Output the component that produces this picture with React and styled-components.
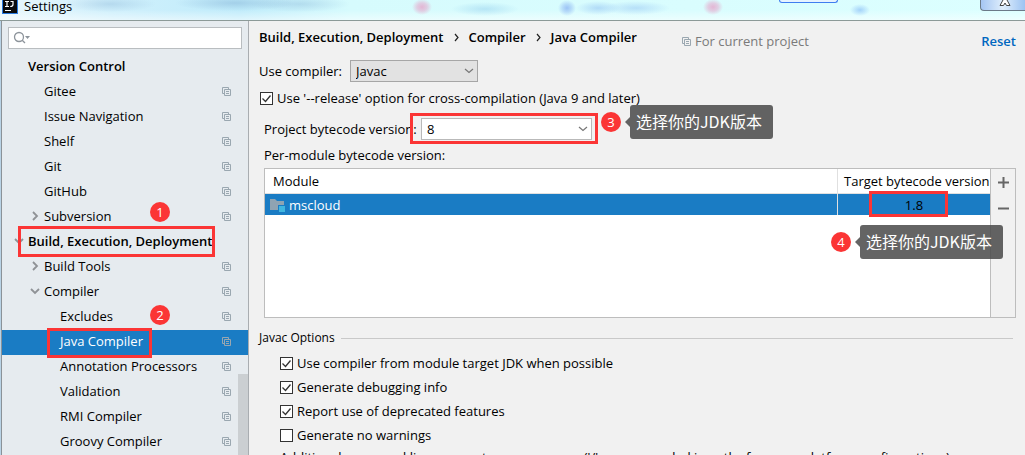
import React from 'react';
import styled, { createGlobalStyle } from 'styled-components';

const GlobalStyle = createGlobalStyle`
  *, *::before, *::after { box-sizing: border-box; }
  html, body, #root { height: 100%; }
  body {
    margin: 0;
    overflow: hidden;
    font: 13px/20px "Open Sans", "Noto Sans CJK SC", sans-serif;
    color: #000;
  }
  button, input, select { font: inherit; color: inherit; }
`;

const red = '#fb3535';
const blue = '#1a7cc4';

const Window = styled.div`
  display: flex;
  flex-direction: column;
  height: 100vh;
  overflow: hidden;
  background: #b9d3e6;
`;

const TitleBar = styled.header`
  position: relative;
  display: flex;
  flex: none;
  gap: 6px;
  height: 21px;
  padding-left: 2px;
  border-bottom: 1px solid #8c9a98;
  background:
    radial-gradient(ellipse 10px 8px at 422px 7px, rgba(228, 175, 208, 0.9), rgba(228, 175, 208, 0.6) 50%, transparent),
    radial-gradient(ellipse 10px 8px at 713px 7px, rgba(228, 175, 208, 0.9), rgba(228, 175, 208, 0.6) 50%, transparent),
    radial-gradient(ellipse 9px 8px at 567px 8px, rgba(150, 190, 245, 0.9), rgba(150, 190, 245, 0.5) 50%, transparent),
    radial-gradient(ellipse 22px 7px at 598px 8px, rgba(160, 205, 245, 0.7), transparent),
    radial-gradient(ellipse 34px 7px at 636px 8px, rgba(160, 205, 245, 0.6), transparent),
    radial-gradient(ellipse 34px 7px at 485px 9px, rgba(160, 215, 240, 0.6), transparent),
    radial-gradient(ellipse 10px 6px at 860px 10px, rgba(150, 200, 248, 0.8), transparent),
    radial-gradient(ellipse 46px 8px at 110px 4px, rgba(120, 165, 205, 0.3), transparent),
    radial-gradient(ellipse 60px 8px at 235px 3px, rgba(120, 165, 205, 0.4), transparent),
    radial-gradient(ellipse 50px 8px at 300px 4px, rgba(120, 165, 205, 0.3), transparent),
    linear-gradient(180deg, transparent 50%, rgba(255, 255, 255, 0.5)),
    linear-gradient(90deg, #e9f7fd 0, #d0f0fc 110px, #c0ecfb 240px, #d6fbfd 350px, #dcffff 100%);
`;

const TitleText = styled.h1`
  margin: 0;
  font-size: 13px;
  font-weight: 400;
  line-height: 13px;
`;

const TopTab = styled.span`
  position: absolute;
  top: 0;
  left: 76%;
  width: 59px;
  height: 3px;
  border: 1px solid #3f7df0;
  border-top: 0;
  border-radius: 0 0 4px 4px;
  background: #e6f3ff;
`;

const CloseButton = styled.button`
  position: absolute;
  top: 0;
  right: 0;
  width: 45px;
  height: 11px;
  padding: 0;
  border: 1px solid #6b7a88;
  border-width: 0 0 1px 1px;
  border-radius: 0 0 0 4px;
  background: linear-gradient(90deg, #a5c6f3, #dfeefc 50%, #9cc3f2);
  svg { display: block; margin: 0 auto 4px 18px; }
`;

const Body = styled.div`
  display: flex;
  flex: 1;
  min-height: 0;
  padding-left: 1px;
`;

const Sidebar = styled.aside`
  position: relative;
  flex: none;
  width: 248px;
  border: solid #8b9298;
  border-width: 0 1px;
  border-right-color: #a9adb1;
  background: #e6ebef;
`;

const SearchBox = styled.label`
  display: flex;
  align-items: center;
  height: 22px;
  margin: 6px;
  border: 1px solid #b9bdc0;
  background: #fff;
  svg { flex: none; margin-left: 4px; }
  input {
    flex: 1;
    min-width: 0;
    padding: 0 4px;
    border: 0;
    outline: 0;
    background: none;
  }
`;

const Tree = styled.ul`
  margin: 0;
  padding: 0;
  list-style: none;
`;

const TreeItem = styled.li`
  position: relative;
`;

const indents = { 0: 12, 1: 28, 2: 44 };

const TreeButton = styled.button`
  display: flex;
  align-items: center;
  width: 100%;
  height: 25px;
  padding: 0 17px 3px ${(p) => indents[p.$level]}px;
  border: 0;
  background: ${(p) => (p.$selected ? blue : 'none')};
  color: ${(p) => (p.$selected ? '#fff' : '#000')};
  font-weight: ${(p) => (p.$level === 0 ? 600 : 400)};
  text-align: left;
  white-space: nowrap;
`;

const ArrowSlot = styled.span`
  display: flex;
  flex: none;
  width: 14px;
`;

const TreeLabel = styled.span`
  flex: 1;
`;

const ScrollThumb = styled.div`
  position: absolute;
  right: 0;
  bottom: 0;
  width: 10px;
  height: 81px;
  background: rgba(170, 172, 175, 0.45);
`;

const Badge = styled.span`
  position: absolute;
  z-index: 2;
  display: grid;
  place-items: center;
  width: 20px;
  height: 20px;
  border-radius: 50%;
  background: ${red};
  color: #fff;
  font-size: 13px;
`;

const TreeBadge = styled(Badge)`
  top: ${(p) => p.$top}px;
  left: 148px;
`;

const Frame = styled.span`
  position: absolute;
  z-index: 2;
  border: 3px solid ${red};
  pointer-events: none;
`;

const Main = styled.main`
  display: flex;
  flex: 1;
  flex-direction: column;
  min-width: 0;
  padding: 6px 9px 0 10px;
  background: #f1f1f1;
  > * { flex: none; }
`;

const Header = styled.div`
  display: flex;
  align-items: flex-start;
  height: 33px;
`;

const Crumbs = styled.nav`
  display: flex;
  width: 423px;
  gap: 10px;
  font-weight: 600;
  white-space: nowrap;
  svg { flex: none; margin-top: 6px; }
`;

const Scope = styled.span`
  display: flex;
  flex: 1;
  align-items: center;
  gap: 4px;
  padding-top: 4px;
  color: #7a7a7a;
`;

const ResetLink = styled.a`
  padding-top: 4px;
  color: #0067c0;
  font-weight: 600;
  text-decoration: none;
`;

const Field = styled.div`
  display: flex;
  align-items: center;
  height: 22px;
  padding-left: ${(p) => (p.$inset ? 5 : 0)}px;
  white-space: nowrap;
`;

const FieldLabel = styled.label`
  flex: none;
  width: ${(p) => p.$width}px;
`;

const Picker = styled.span`
  position: relative;
  width: ${(p) => p.$width}px;
  height: 22px;
  select {
    width: 100%;
    height: 100%;
    padding: 0 24px 0 5px;
    border: 1px solid ${(p) => (p.$plain ? '#b9b9b9' : '#a6a6a6')};
    border-radius: 0;
    outline: 0;
    background: ${(p) => (p.$plain ? '#fff' : '#e2e2e2')};
    appearance: none;
  }
  > svg {
    position: absolute;
    top: 8px;
    right: 4px;
    pointer-events: none;
  }
`;

const CheckLabel = styled.label`
  display: flex;
  align-items: center;
  gap: 4px;
  height: 24px;
  white-space: nowrap;
`;

const Box = styled.span`
  position: relative;
  display: flex;
  width: 13px;
  height: 13px;
  input {
    width: 13px;
    height: 13px;
    margin: 0;
    border: 1px solid #333;
    background: #fff;
    appearance: none;
  }
  svg { position: absolute; inset: 0; display: none; pointer-events: none; }
  input:checked + svg { display: block; }
`;

const ReleaseRow = styled.div`
  margin: 4px 0 8px 1px;
`;

const Tip = styled.span`
  position: absolute;
  z-index: 3;
  padding: 0 6px;
  width: 143px;
  height: 34px;
  border-radius: 3px;
  background: rgba(74, 74, 74, 0.86);
  color: #fff;
  font: 16px/32px "Noto Sans CJK SC", sans-serif;
  white-space: nowrap;
  &::before {
    content: '';
    position: absolute;
    top: 12px;
    left: -5px;
    border: 5px solid transparent;
    border-left: 0;
    border-right-color: rgba(74, 74, 74, 0.86);
  }
`;

const TableLabel = styled.div`
  height: 20px;
  margin: 5px 0 3px 5px;
`;

const TablePanel = styled.section`
  display: flex;
  height: 150px;
  margin-left: 5px;
  border: 1px solid #bdbdbd;
  background: #fff;
`;

const TableArea = styled.div`
  flex: 1;
`;

const ModuleTable = styled.table`
  width: 100%;
  border-collapse: separate;
  border-spacing: 0;
  table-layout: fixed;
  th, td {
    padding: 0 8px;
    text-align: left;
    font-weight: 400;
    white-space: nowrap;
  }
  th { height: 25px; border-bottom: 1px solid #e0e0e0; }
  th + th, td + td { width: 153px; border-left: 1px solid #e0e0e0; }
  th + th { padding: 0 6px; }
  td { height: 21px; padding: 0 4px; background: ${blue}; color: #fff; }
  td + td { position: relative; color: #000; text-align: center; }
`;

const ModuleName = styled.span`
  display: flex;
  align-items: center;
  gap: 4px;
`;

const SideTools = styled.div`
  display: flex;
  flex-direction: column;
  width: 25px;
  border-left: 1px solid #bdbdbd;
  background: #f1f1f1;
  button {
    display: grid;
    place-items: center;
    width: 24px;
    height: 26px;
    padding: 0;
    border: 0;
    background: none;
  }
`;

const Options = styled.fieldset`
  min-width: 0;
  margin: 10px 0 0;
  padding: 0;
  border: 0;
`;

const OptionsTitle = styled.legend`
  display: flex;
  align-items: center;
  gap: 6px;
  width: 100%;
  padding: 0 3px 0 0;
  font-size: 12px;
  &::after { content: ''; flex: 1; height: 1px; background: #c9c9c9; }
`;

const OptionList = styled.div`
  padding: 3px 0 0 21px;
`;

const Extra = styled.div`
  display: flex;
  gap: 75px;
  white-space: nowrap;
`;

const CopyIcon = () => (
  <svg width="9" height="9" viewBox="0 0 9 9" fill="none" stroke="#9aa7b0" aria-hidden="true">
    <path d="M2 6.500H.5V.5h6V2M2.500 2.500h6v6h-6zM4 4.500h3M4 6.500h3" />
  </svg>
);

const Chevron = ({ color = '#777' }) => (
  <svg width="10" height="6" viewBox="0 0 10 6" fill="none" stroke={color} strokeWidth="1.200" aria-hidden="true">
    <path d="M1 1l4 3.500L9 1" />
  </svg>
);

const TreeArrow = ({ open }) => (
  <svg width="10" height="10" viewBox="0 0 10 10" fill="none" stroke="#8f9296" strokeWidth="1.800" aria-hidden="true">
    <path d={open ? 'M1 3l4 4 4-4' : 'M3 1l4 4-4 4'} />
  </svg>
);

const CrumbArrow = () => (
  <svg width="5" height="9" viewBox="0 0 5 9" fill="none" stroke="#222" strokeWidth="1.200" aria-hidden="true">
    <path d="M1 1l3 3.500L1 8" />
  </svg>
);

const Check = ({ label, checked }) => (
  <CheckLabel>
    <Box>
      <input type="checkbox" defaultChecked={checked} />
      <svg width="13" height="13" viewBox="0 0 13 13" fill="none" stroke="#333" strokeWidth="1.300">
        <path d="M2.500 6.500l3 3 5-6" />
      </svg>
    </Box>
    {label}
  </CheckLabel>
);

const BuildFrame = styled(Frame)`
  top: -4px;
  left: 16px;
  width: 197px;
  height: 31px;
`;
const JavaFrame = styled(Frame)`
  top: -2px;
  left: 45px;
  width: 105px;
  height: 30px;
`;
const VersionFrame = styled(Frame)`
  inset: -5px -6px -4px -11px;
`;
const TargetFrame = styled(Frame)`
  inset: -3px 42px -2px 31px;
`;
const VersionBadge = styled(Badge)`
  top: -6px;
  left: 180px;
`;
const VersionTip = styled(Tip)`
  top: -13px;
  left: 209px;
`;
const TargetBadge = styled(Badge)`
  top: 38px;
  left: -7px;
`;
const TargetTip = styled(Tip)`
  top: 31px;
  left: 22px;
  text-align: left;
`;

const tree = [
  { label: 'Version Control', level: 0 },
  { label: 'Gitee', level: 1, copy: true },
  { label: 'Issue Navigation', level: 1, copy: true },
  { label: 'Shelf', level: 1, copy: true },
  { label: 'Git', level: 1, copy: true },
  { label: 'GitHub', level: 1, copy: true },
  { label: 'Subversion', level: 1, copy: true, arrow: 'closed' },
  { label: 'Build, Execution, Deployment', level: 0, arrow: 'open', mark: <><BuildFrame /><TreeBadge $top={-28}>1</TreeBadge></> },
  { label: 'Build Tools', level: 1, copy: true, arrow: 'closed' },
  { label: 'Compiler', level: 1, copy: true, arrow: 'open' },
  { label: 'Excludes', level: 2, copy: true },
  { label: 'Java Compiler', level: 2, copy: true, selected: true, mark: <><JavaFrame /><TreeBadge $top={-25}>2</TreeBadge></> },
  { label: 'Annotation Processors', level: 2, copy: true },
  { label: 'Validation', level: 2, copy: true },
  { label: 'RMI Compiler', level: 2, copy: true },
  { label: 'Groovy Compiler', level: 2, copy: true },
];

const options = [
  ['Use compiler from module target JDK when possible', true],
  ['Generate debugging info', true],
  ['Report use of deprecated features', true],
  ['Generate no warnings', false],
];

export default function App() {
  return (
    <Window>
      <GlobalStyle />
      <TitleBar>
        <svg width="16" height="14" viewBox="0 0 16 14" aria-hidden="true">
          <path d="M0 0h16v14H0z" fill="#2c7be0" />
          <path d="M1 0h14v13H1z" fill="#0b0b0d" />
          <path d="M3 1.500h4M5 1v5M3 6.500h4M8.500 1.500h3M11 1v3.500q0 2-2.800 2" stroke="#fff" strokeWidth="1.200" fill="none" />
          <path d="M3 10.500h6" stroke="#fff" />
        </svg>
        <TitleText>Settings</TitleText>
        <TopTab />
        <CloseButton aria-label="Close">
          <svg width="12" height="7" viewBox="0 0 12 7" fill="#fff" stroke="#444" aria-hidden="true">
            <path d="M4 0L1 5.500h3.500L6 3l1.500 2.500H11L8 0" />
          </svg>
        </CloseButton>
      </TitleBar>
      <Body>
        <Sidebar>
          <SearchBox>
            <svg width="18" height="14" viewBox="0 0 18 14" fill="none" stroke="#8d949b" strokeWidth="1.300" aria-hidden="true">
              <circle cx="6" cy="6" r="4.500" />
              <path d="M9.200 9.200L12 12" />
              <path d="M12 5h5l-2.500 3z" fill="#8d949b" stroke="none" />
            </svg>
            <input type="text" aria-label="Search settings" />
          </SearchBox>
          <Tree>
            {tree.map((t) => (
              <TreeItem key={t.label}>
                <TreeButton $level={t.level} $selected={t.selected}>
                  <ArrowSlot>{t.arrow && <TreeArrow open={t.arrow === 'open'} />}</ArrowSlot>
                  <TreeLabel>{t.label}</TreeLabel>
                  {t.copy && <CopyIcon />}
                </TreeButton>
                {t.mark}
              </TreeItem>
            ))}
          </Tree>
          <ScrollThumb />
        </Sidebar>
        <Main>
          <Header>
            <Crumbs aria-label="Breadcrumb">
              <span>Build, Execution, Deployment</span>
              <CrumbArrow />
              <span>Compiler</span>
              <CrumbArrow />
              <span>Java Compiler</span>
            </Crumbs>
            <Scope><CopyIcon />For current project</Scope>
            <ResetLink href="#reset">Reset</ResetLink>
          </Header>
          <Field>
            <FieldLabel htmlFor="compiler" $width={91}>Use compiler:</FieldLabel>
            <Picker $width={128}>
              <select id="compiler" defaultValue="Javac"><option>Javac</option></select>
              <Chevron />
            </Picker>
          </Field>
          <ReleaseRow>
            <Check label="Use '--release' option for cross-compilation (Java 9 and later)" checked />
          </ReleaseRow>
          <Field $inset>
            <FieldLabel htmlFor="bytecode" $width={157}>Project bytecode version:</FieldLabel>
            <Picker $width={171} $plain>
              <select id="bytecode" defaultValue="8"><option>8</option></select>
              <Chevron />
              <VersionFrame />
              <VersionBadge>3</VersionBadge>
              <VersionTip>选择你的JDK版本</VersionTip>
            </Picker>
          </Field>
          <TableLabel>Per-module bytecode version:</TableLabel>
          <TablePanel>
            <TableArea>
              <ModuleTable>
                <thead>
                  <tr><th>Module</th><th>Target bytecode version</th></tr>
                </thead>
                <tbody>
                  <tr>
                    <td>
                      <ModuleName>
                        <svg width="16" height="14" viewBox="0 0 16 14" aria-hidden="true">
                          <path d="M1 1h5l2 2h7v9H1z" fill="#8fa3b2" />
                          <path d="M9 7h7v7H9z" fill={blue} />
                          <path d="M10 8h6v6h-6z" fill="#40b6e0" />
                        </svg>
                        mscloud
                      </ModuleName>
                    </td>
                    <td>
                      1.8
                      <TargetFrame />
                      <TargetBadge>4</TargetBadge>
                      <TargetTip>选择你的JDK版本</TargetTip>
                    </td>
                  </tr>
                </tbody>
              </ModuleTable>
            </TableArea>
            <SideTools>
              <button aria-label="Add">
                <svg width="11" height="11" viewBox="0 0 11 11" stroke="#666" strokeWidth="2"><path d="M0 5.500h11M5.500 0v11" /></svg>
              </button>
              <button aria-label="Remove">
                <svg width="11" height="11" viewBox="0 0 11 11" stroke="#666" strokeWidth="2"><path d="M0 5.500h11" /></svg>
              </button>
            </SideTools>
          </TablePanel>
          <Options>
            <OptionsTitle>Javac Options</OptionsTitle>
            <OptionList>
              {options.map(([label, on]) => <Check key={label} label={label} checked={on} />)}
              <Extra>
                <span>Additional command line parameters:</span>
                <span>('/' recommended in paths for cross-platform configurations)</span>
              </Extra>
            </OptionList>
          </Options>
        </Main>
      </Body>
    </Window>
  );
}
